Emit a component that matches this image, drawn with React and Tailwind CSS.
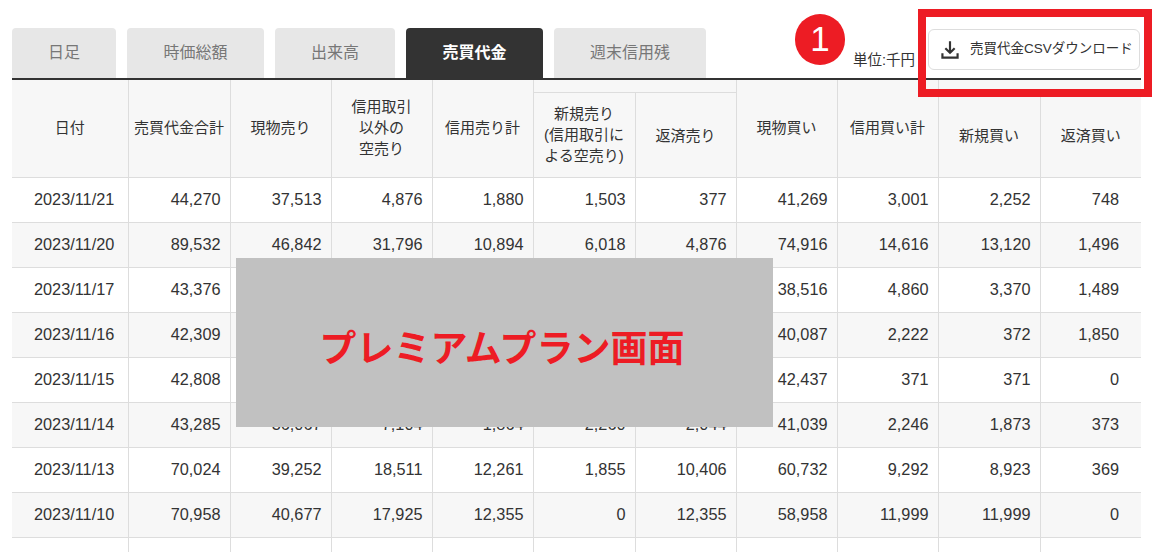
import React from "react";

const tabs = [
  { label: "日足", w: "w-[104px]" },
  { label: "時価総額", w: "w-[137px]" },
  { label: "出来高", w: "w-[120px]" },
  { label: "売買代金", w: "w-[137px]", active: true },
  { label: "週末信用残", w: "w-[152px]" },
];

const rows = [
  ["2023/11/21", "44,270", "37,513", "4,876", "1,880", "1,503", "377", "41,269", "3,001", "2,252", "748"],
  ["2023/11/20", "89,532", "46,842", "31,796", "10,894", "6,018", "4,876", "74,916", "14,616", "13,120", "1,496"],
  ["2023/11/17", "43,376", "", "", "", "", "", "38,516", "4,860", "3,370", "1,489"],
  ["2023/11/16", "42,309", "", "", "", "", "", "40,087", "2,222", "372", "1,850"],
  ["2023/11/15", "42,808", "", "", "", "", "", "42,437", "371", "371", "0"],
  ["2023/11/14", "43,285", "36,067", "7,104", "1,864", "2,260", "2,044", "41,039", "2,246", "1,873", "373"],
  ["2023/11/13", "70,024", "39,252", "18,511", "12,261", "1,855", "10,406", "60,732", "9,292", "8,923", "369"],
  ["2023/11/10", "70,958", "40,677", "17,925", "12,355", "0", "12,355", "58,958", "11,999", "11,999", "0"],
  ["", "", "", "", "", "", "", "", "", "", ""],
];

const widths = ["w-[116px]", "w-[102px]", "w-[101px]", "w-[101px]", "w-[101px]", "w-[102px]", "w-[101px]", "w-[101px]", "w-[101px]", "w-[102px]", "w-[101px]"];

const th = "border border-[#ddd] border-l-0 bg-[#f7f7f7] font-normal text-[15px] leading-[21px] text-[#333] p-0 text-center align-middle";
const thTall = `${th} border-t-0 pb-[2px]`;

const App = () => {
  return (
    <div className="relative h-[552px] w-[1155px] overflow-hidden bg-white font-['Liberation_Sans','Noto_Sans_CJK_JP',sans-serif] text-[#333]">
      <div className="mx-3 w-[1129px] pt-7">
        <div className="flex items-end border-b-2 border-[#333] h-[52px]">
          <div className="flex gap-[11px]">
            {tabs.map((t) => (
              <div
                key={t.label}
                className={`${t.w} h-[50px] rounded-t flex items-center justify-center text-base ${
                  t.active ? "bg-[#333] text-white font-bold" : "bg-[#e7e7e7] text-[#777]"
                }`}
              >
                {t.label}
              </div>
            ))}
          </div>
          <span className="ml-auto mr-[226px] mb-[10px] text-[14.5px] leading-4 whitespace-nowrap">単位:千円</span>
        </div>

        <table className="table-fixed w-[1129px] border-collapse">
          <colgroup>
            {widths.map((w, i) => (
              <col key={i} className={w} />
            ))}
          </colgroup>
          <thead>
            <tr className="h-3">
              <th rowSpan={2} className={thTall}>日付</th>
              <th rowSpan={2} className={thTall}>売買代金合計</th>
              <th rowSpan={2} className={thTall}>現物売り</th>
              <th rowSpan={2} className={thTall}>信用取引<br />以外の<br />空売り</th>
              <th rowSpan={2} className={thTall}>信用売り計</th>
              <th colSpan={2} className={`${th} border-t-0`}></th>
              <th rowSpan={2} className={thTall}>現物買い</th>
              <th rowSpan={2} className={thTall}>信用買い計</th>
              <th colSpan={2} className={`${th} border-t-0 border-r-0`}></th>
            </tr>
            <tr className="h-[85px]">
              <th className={`${th} pb-[1px]`}>新規売り<br />(信用取引に<br />よる空売り)</th>
              <th className={`${th} pt-[1px]`}>返済売り</th>
              <th className={`${th} pt-[1px]`}>新規買い</th>
              <th className={`${th} pt-[1px] border-r-0`}>返済買い</th>
            </tr>
          </thead>
          <tbody>
            {rows.map((row, i) => (
              <tr key={i} className={`h-[45px] ${i % 2 === 1 ? "bg-[#f7f7f7]" : "bg-white"}`}>
                {row.map((cell, j) => (
                  <td
                    key={j}
                    className={`border-b border-r border-[#ddd] text-[16.3px] p-0 ${
                      j === 0 ? "text-left pl-[22px]" : j === 10 ? "text-right pr-[22px] border-r-0" : "text-right pr-[9px]"
                    }`}
                  >
                    {cell}
                  </td>
                ))}
              </tr>
            ))}
          </tbody>
        </table>
      </div>

      {/* overlays */}
      <div className="absolute left-[236px] top-[258px] w-[537px] h-[169px] bg-[#c1c1c1] flex items-center justify-center pt-[8px] pr-[5px] text-[#ed1c24] font-bold text-[37px] font-['Noto_Sans_CJK_JP',sans-serif]">
        プレミアムプラン画面
      </div>

      <div className="absolute left-[795px] top-[14px] w-[50px] h-[51px] rounded-full bg-[#ed1c24] flex items-center justify-center text-white text-[35px] font-['Liberation_Sans',sans-serif]">
        1
      </div>

      <div className="absolute left-[918px] top-[9px] w-[234px] h-[88px] border-8 border-[#ed1c24]"></div>

      <div className="absolute left-[928px] top-[29px] w-[212px] h-[41px] rounded-md border border-[#ddd] bg-white flex items-center pl-[8px]">
        <svg width="26" height="26" viewBox="0 0 24 24" fill="#333">
          <path d="M4 15h2v3h12v-3h2v5H4zM11 4h2v8.2l2.6-2.6L17 11l-5 5-5-5 1.4-1.4 2.6 2.6z" />
        </svg>
        <span className="ml-[7px] text-[13.5px] whitespace-nowrap">売買代金CSVダウンロード</span>
      </div>
    </div>
  );
};

export default App;
